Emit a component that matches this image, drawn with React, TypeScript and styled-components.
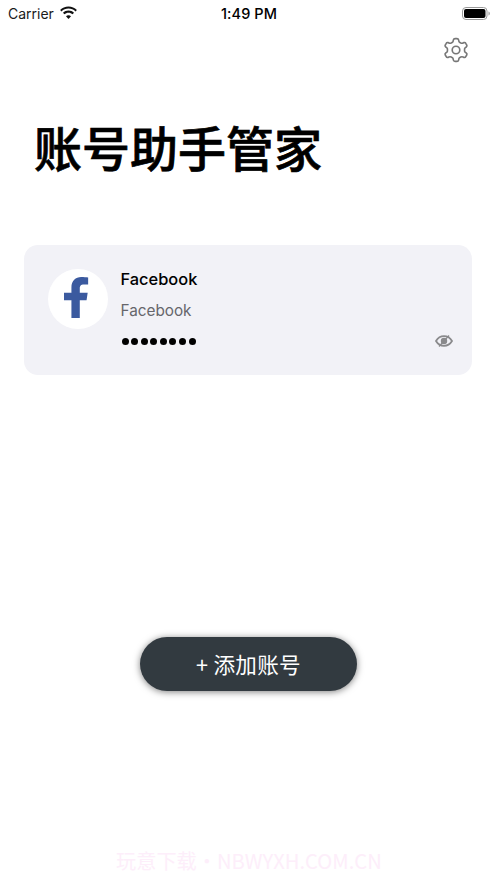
import React from 'react'
import styled, { createGlobalStyle } from 'styled-components'

const GlobalStyle = createGlobalStyle`
  html, body {
    margin: 0;
    padding: 0;
    background: #fff;
  }
  body {
    font-family: Inter, "Noto Sans CJK SC", sans-serif;
    color: #000;
  }
`

const Screen = styled.div`
  position: relative;
  width: 497px;
  height: 883px;
  overflow: hidden;
  background: #fff;
`

const StatusBar = styled.div`
  display: grid;
  grid-template-columns: 1fr auto 1fr;
  align-items: center;
  height: 26px;
  padding: 0 7px 0 8px;
  font-size: 14px;
`

const Carrier = styled.div`
  display: flex;
  align-items: center;
  gap: 5px;
  color: #1a1a1a;
`

const Clock = styled.div`
  font-weight: 500;
  font-size: 14.5px;
  letter-spacing: 0.1px;
`

const Battery = styled.div`
  justify-self: end;
  display: flex;
  align-items: center;
`

const TopBar = styled.div`
  display: flex;
  justify-content: flex-end;
  padding: 11px 28px 0 0;
  height: 27px;
`

const Title = styled.h1`
  margin: 47px 0 0 34px;
  font-family: "Noto Sans CJK SC", sans-serif;
  font-size: 48px;
  line-height: 70px;
  font-weight: 500;
  -webkit-text-stroke: 0.7px #000;
`

const Card = styled.div`
  display: flex;
  position: relative;
  height: 130px;
  box-sizing: border-box;
  margin: 64px 25px 0 24px;
  padding: 24px;
  gap: 12px;
  background: #f2f2f7;
  border-radius: 14px;
`

const Avatar = styled.div`
  display: flex;
  align-items: center;
  justify-content: center;
  flex: none;
  box-sizing: border-box;
  width: 60px;
  height: 60px;
  padding: 0 2px 3px 0;
  border-radius: 50%;
  background: #fff;
`

const Info = styled.div`
  display: flex;
  flex-direction: column;
  margin-top: -1px;
  padding-left: 0.5px;
`

const Name = styled.div`
  font-size: 16.4px;
  line-height: 22px;
  font-weight: 500;
`

const Account = styled.div`
  margin-top: 10px;
  font-size: 15.3px;
  line-height: 22px;
  color: #66666b;
`

const Dots = styled.div`
  display: flex;
  gap: 2.6px;
  margin-top: 16px;
  padding-left: 1px;
`

const Dot = styled.span`
  width: 7px;
  height: 7px;
  border-radius: 50%;
  background: #000;
`

const EyeSlot = styled.div`
  position: absolute;
  right: 19px;
  bottom: 27px;
  display: flex;
`

const AddRow = styled.div`
  display: flex;
  justify-content: center;
  margin-top: 262px;
`

const AddButton = styled.button`
  width: 217px;
  height: 54px;
  border: none;
  border-radius: 27px;
  background: #323a40;
  color: #fff;
  font-family: "Noto Sans CJK SC", sans-serif;
  font-size: 21.6px;
  font-weight: 400;
  letter-spacing: 0.3px;
  padding: 0 0 2px;
  box-shadow: 0 1px 7px rgba(0, 0, 0, 0.5);
`

const Watermark = styled.div`
  position: absolute;
  left: 116px;
  top: 848px;
  font-family: "Noto Sans CJK SC", sans-serif;
  font-size: 20.2px;
  line-height: 26px;
  white-space: nowrap;
  color: #fdeefa;
`

const Wifi = () => (
  <svg width="19" height="14" viewBox="0 0 19 14" fill="#111">
    <path d="M9.5 2.6c2.7 0 5.1 1 7 2.8l1.4-1.5C15.7 1.7 12.8.4 9.5.4S3.300 1.700 1.100 3.900l1.400 1.500c1.900-1.800 4.300-2.800 7-2.800z" />
    <path d="M9.500 6.700c1.600 0 3 .6 4.100 1.600l1.400-1.500c-1.500-1.400-3.400-2.200-5.500-2.200S5.500 5.400 4 6.800l1.400 1.500c1.100-1 2.500-1.600 4.100-1.600z" />
    <path d="M9.500 9.300c-1 0-1.800.4-2.500 1l2.500 2.800 2.500-2.800c-.7-.6-1.500-1-2.500-1z" />
  </svg>
)

const BatteryIcon = () => (
  <svg width="28" height="13" viewBox="0 0 28 13">
    <rect x="0.5" y="0.5" width="24.500" height="12" rx="3.500" fill="none" stroke="#999" />
    <rect x="2" y="2" width="21.500" height="9" rx="2" fill="#000" />
    <path d="M26.500 4.500c.8.300 1.300 1.100 1.300 2s-.5 1.700-1.300 2z" fill="#999" />
  </svg>
)

const Gear = () => (
  <svg width="26" height="26" viewBox="0 0 24 24" fill="none" stroke="#777" strokeWidth="1.500" strokeLinejoin="round">
    <path d="M9.600 2.600c.2-.9 1-1.100 1.500-1.100h1.800c.5 0 1.300.2 1.500 1.100l.3 1.500c.1.500.5.800.9 1l.9.500c.4.200.9.300 1.400.100l1.400-.5c.8-.3 1.500.2 1.700.6l.9 1.600c.3.500.3 1.200-.3 1.700l-1.200 1c-.4.300-.5.800-.5 1.300v1.200c0 .5.100 1 .5 1.300l1.200 1c.6.500.6 1.200.3 1.700l-.9 1.600c-.2.400-.9.900-1.700.6l-1.400-.5c-.5-.2-1-.1-1.400.1l-.9.500c-.4.200-.8.500-.9 1l-.3 1.500c-.2.900-1 1.100-1.500 1.100h-1.800c-.5 0-1.300-.2-1.500-1.100l-.3-1.500c-.1-.5-.5-.8-.9-1l-.9-.5c-.4-.2-.9-.3-1.400-.1l-1.400.5c-.8.3-1.500-.2-1.700-.6l-.9-1.600c-.3-.5-.3-1.200.3-1.700l1.200-1c.4-.3.500-.8.500-1.300v-1.200c0-.5-.1-1-.5-1.300l-1.200-1c-.6-.5-.6-1.200-.3-1.700l.9-1.600c.2-.4.900-.9 1.700-.6l1.400.5c.5.200 1 .1 1.400-.1l.9-.5c.4-.2.800-.5.900-1z" />
    <circle cx="12" cy="12" r="3.500" />
  </svg>
)

const FacebookF = () => (
  <svg width="26" height="41" viewBox="0 0 28 44" fill="#3b5a9f">
    <path d="M8 44V25H0v-8h8v-6C8 4 12.500 0 18.500 0c2.800 0 5.500.2 7.500.5V8h-4.500c-3.500 0-4.500 1.700-4.500 4.200V17h8.500l-1.200 8H17v19z" />
  </svg>
)

const Eye = () => (
  <svg width="18" height="14" viewBox="0 0 18 14" fill="none" stroke="#8a8a8c" strokeWidth="1.800">
    <path d="M1 7c1.800-3 4.700-4.800 8-4.800S15.200 4 17 7c-1.800 3-4.700 4.800-8 4.800S2.800 10 1 7z" />
    <circle cx="9" cy="7" r="3.200" fill="#8a8a8c" stroke="none" />
    <path d="M4 12.500 14 1.500" strokeWidth="1.200" />
  </svg>
)

export default function App() {
  return (
    <Screen>
      <GlobalStyle />
      <StatusBar>
        <Carrier>
          Carrier
          <Wifi />
        </Carrier>
        <Clock>1:49 PM</Clock>
        <Battery>
          <BatteryIcon />
        </Battery>
      </StatusBar>
      <TopBar>
        <Gear />
      </TopBar>
      <Title>账号助手管家</Title>
      <Card>
        <Avatar>
          <FacebookF />
        </Avatar>
        <Info>
          <Name>Facebook</Name>
          <Account>Facebook</Account>
          <Dots>
            {Array.from({ length: 8 }).map((_, i) => (
              <Dot key={i} />
            ))}
          </Dots>
        </Info>
        <EyeSlot>
          <Eye />
        </EyeSlot>
      </Card>
      <AddRow>
        <AddButton>+ 添加账号</AddButton>
      </AddRow>
      <Watermark>玩意下载・NBWYXH.COM.CN</Watermark>
    </Screen>
  )
}
